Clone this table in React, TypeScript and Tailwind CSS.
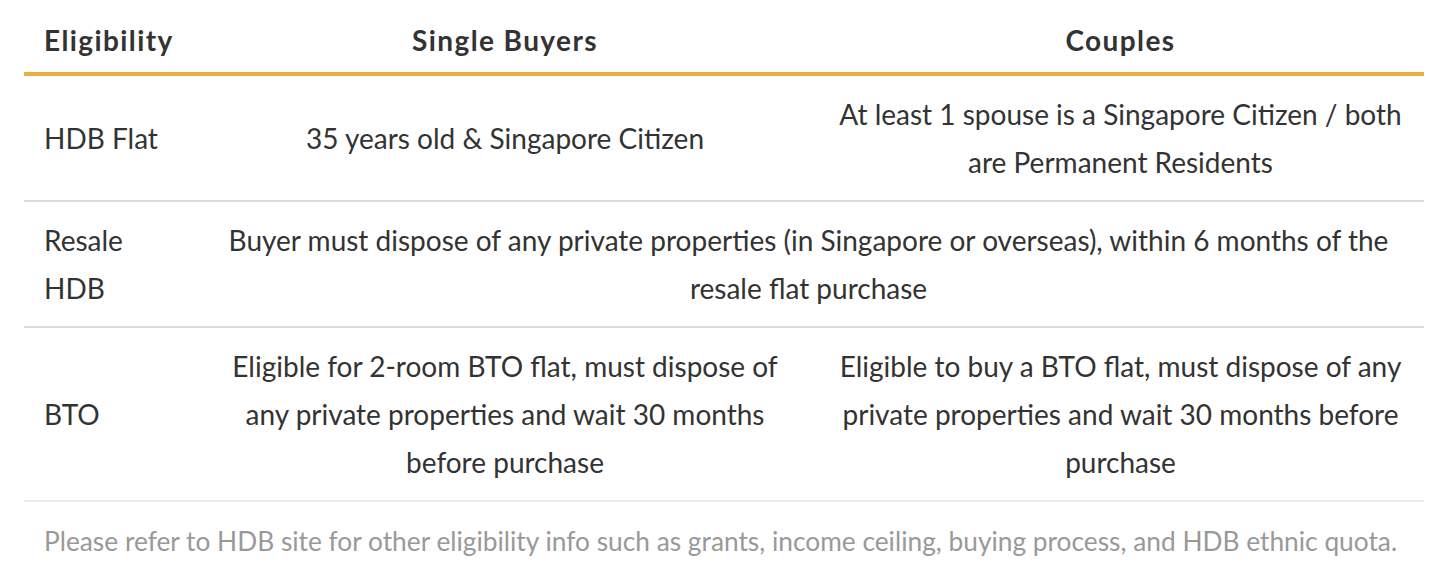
import React from 'react'

const font = { fontFamily: '"Lato", "Open Sans", sans-serif' }

const App: React.FC = () => {
  return (
    <div className="w-[1442px] h-[566px] bg-white pl-6 text-[#333]" style={font}>
      <div className="w-[1400px] grid grid-cols-[169px_624px_607px] text-[28px] leading-[48px]">
        {/* header */}
        <div className="pl-5 pt-4 pb-2 font-bold tracking-[1.4px] border-b-4 border-[#eeb03d]">Eligibility</div>
        <div className="pt-4 pb-2 font-bold tracking-[1.4px] text-center border-b-4 border-[#eeb03d]">Single Buyers</div>
        <div className="pt-4 pb-2 font-bold tracking-[1.4px] text-center border-b-4 border-[#eeb03d]">Couples</div>

        {/* HDB flat */}
        <div className="pl-5 flex items-center border-b-2 border-[#d9dadc] py-[14px]">HDB Flat</div>
        <div className="flex items-center justify-center text-center whitespace-nowrap border-b-2 border-[#d9dadc] py-[14px]">
          35 years old &amp; Singapore Citizen
        </div>
        <div className="flex items-center justify-center text-center whitespace-nowrap border-b-2 border-[#d9dadc] py-[14px]">
          <span>
            At least 1 spouse is a Singapore Citizen / both
            <br />
            are Permanent Residents
          </span>
        </div>

        {/* Resale */}
        <div className="pl-5 border-b-2 border-[#d9dadc] py-[14px]">
          Resale
          <br />
          HDB
        </div>
        <div className="col-span-2 text-center whitespace-nowrap border-b-2 border-[#d9dadc] py-[14px]">
          Buyer must dispose of any private properties (in Singapore or overseas), within 6 months of the
          <br />
          resale flat purchase
        </div>

        {/* BTO */}
        <div className="pl-5 flex items-center border-b-2 border-[#ececec] py-[14px]">BTO</div>
        <div className="text-center whitespace-nowrap border-b-2 border-[#ececec] py-[14px]">
          Eligible for 2-room BTO flat, must dispose of
          <br />
          any private properties and wait 30 months
          <br />
          before purchase
        </div>
        <div className="text-center whitespace-nowrap border-b-2 border-[#ececec] py-[14px]">
          Eligible to buy a BTO flat, must dispose of any
          <br />
          private properties and wait 30 months before
          <br />
          purchase
        </div>
      </div>
      <p className="pl-5 pt-[15px] whitespace-nowrap text-[26.3px] leading-[48px] text-[#999]">
        Please refer to HDB site for other eligibility info such as grants, income ceiling, buying process, and HDB ethnic quota.
      </p>
    </div>
  )
}

export default App
